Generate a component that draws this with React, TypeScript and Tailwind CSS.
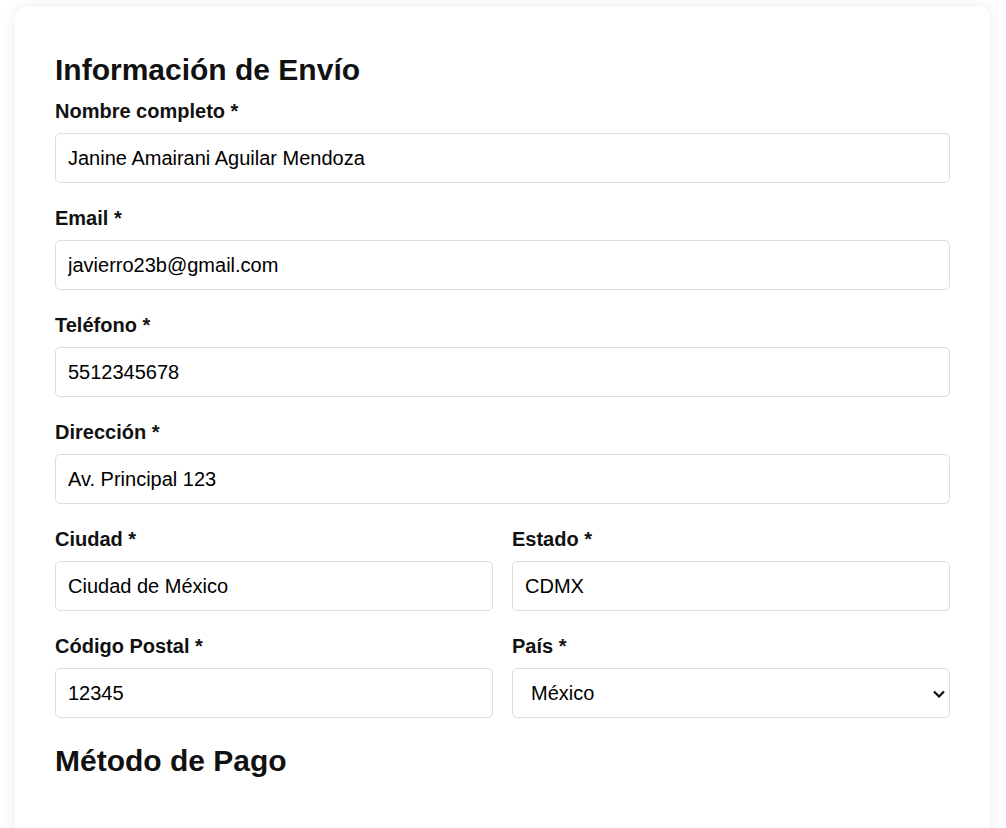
import { ReactNode } from 'react'

const font = { fontFamily: '"Liberation Sans", Arial, sans-serif' }

function Field({ label, children }: { label: string; children: ReactNode }) {
  return (
    <div className="mb-[24px]">
      <label className="block text-[20px] leading-[23px] font-bold text-[#111] mb-[10px]">{label}</label>
      {children}
    </div>
  )
}

function TextInput({ value }: { value: string }) {
  return (
    <input
      defaultValue={value}
      className="block w-full h-[50px] px-[12px] border border-[#dddddd] rounded-[5px] text-[20px] text-black bg-white outline-none"
    />
  )
}

export default function App() {
  return (
    <div style={font} className="min-h-screen bg-white pt-[7px] pl-[15px] pr-[16px]">
      <div className="bg-white rounded-[10px] shadow-[0_0_15px_rgba(0,0,0,0.08)] px-[40px] pt-[40px] pb-[120px]">
        <h2 className="mt-[5px] mb-[12px] text-[30px] leading-[36px] font-bold text-[#111]">Información de Envío</h2>

        <Field label="Nombre completo *">
          <TextInput value="Janine Amairani Aguilar Mendoza" />
        </Field>
        <Field label="Email *">
          <TextInput value="javierro23b@gmail.com" />
        </Field>
        <Field label="Teléfono *">
          <TextInput value="5512345678" />
        </Field>
        <Field label="Dirección *">
          <TextInput value="Av. Principal 123" />
        </Field>

        <div className="grid grid-cols-2 gap-x-[19px]">
          <Field label="Ciudad *">
            <TextInput value="Ciudad de México" />
          </Field>
          <Field label="Estado *">
            <TextInput value="CDMX" />
          </Field>
          <Field label="Código Postal *">
            <TextInput value="12345" />
          </Field>
          <Field label="País *">
            <div className="relative">
              <select
                defaultValue="MX"
                className="block w-full h-[50px] pl-[18px] pr-[30px] border border-[#dddddd] rounded-[5px] text-[20px] text-black bg-white outline-none appearance-none"
              >
                <option value="MX">México</option>
                <option value="US">Estados Unidos</option>
                <option value="CA">Canadá</option>
              </select>
              <svg className="absolute right-[5px] top-[22px] pointer-events-none" width="12" height="8" viewBox="0 0 12 8">
                <path d="M1 1.5 L6 6.5 L11 1.5" fill="none" stroke="#111" strokeWidth="2.2" />
              </svg>
            </div>
          </Field>
        </div>

        <h2 className="mt-[1px] text-[30px] leading-[36px] font-bold text-[#111]">Método de Pago</h2>
      </div>
    </div>
  )
}
